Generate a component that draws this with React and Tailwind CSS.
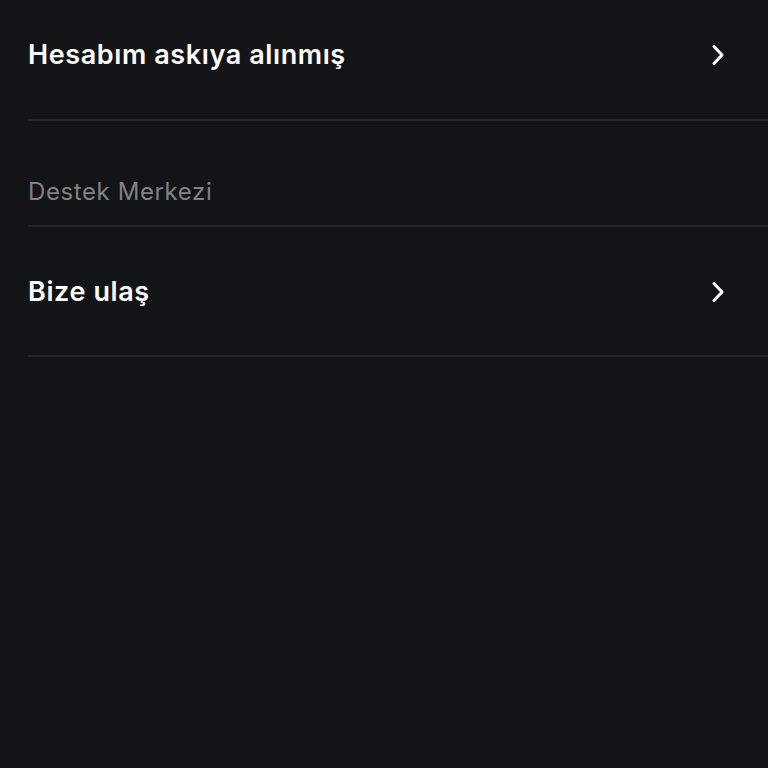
import React from "react";

function Chevron() {
  return (
    <svg width="20" height="24" viewBox="0 0 20 24" fill="none" className="mr-[40px]">
      <path d="M6 3.5 L14 12 L6 20.5" stroke="#ffffff" strokeWidth="3" strokeLinecap="round" strokeLinejoin="round" />
    </svg>
  );
}

export default function App() {
  return (
    <div className="w-[768px] h-[768px] bg-[#131418] text-white" style={{ fontFamily: "Inter, 'Noto Sans', sans-serif" }}>
      <div className="pl-[28px]">
        <div className="flex items-center justify-between pt-[36px] pb-[45px]">
          <span className="text-[27px] leading-[38px] font-semibold tracking-[0.6px]">Hesabım askıya alınmış</span>
          <Chevron />
        </div>
        <div className="h-[2px] bg-[#25262a]" />
        <div className="pt-[56px] pb-[18px]">
          <span className="text-[24px] leading-[30px] text-[#818287] tracking-[0.6px]">Destek Merkezi</span>
        </div>
        <div className="h-[2px] bg-[#25262a]" />
        <div className="flex items-center justify-between pt-[46px] pb-[44px]">
          <span className="text-[27px] leading-[38px] font-semibold tracking-[0.6px]">Bize ulaş</span>
          <Chevron />
        </div>
        <div className="h-[2px] bg-[#25262a]" />
      </div>
    </div>
  );
}
